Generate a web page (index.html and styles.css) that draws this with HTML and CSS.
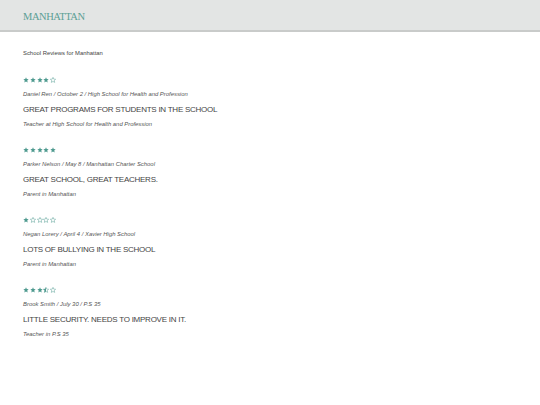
FILE: index.html
```html
<!DOCTYPE html>
<html>
<head>
<meta charset="utf-8">
<link rel="stylesheet" href="styles.css">
</head>
<body>
<svg width="0" height="0" class="defs">
  <defs>
    <path id="star" d="M5 0.6 L6.3 3.5 L9.4 3.8 L7.1 5.9 L7.8 9 L5 7.4 L2.2 9 L2.9 5.9 L0.6 3.8 L3.7 3.5 Z"/>
    <clipPath id="lefthalf"><rect x="0" y="0" width="5" height="10"/></clipPath>
  </defs>
</svg>
<header class="topbar">
  <div class="brand">MANHATTAN</div>
</header>
<main class="content">
  <p class="intro">School Reviews for Manhattan</p>

  <section class="review">
    <div class="stars">
      <svg viewBox="0 0 10 10" class="st"><use href="#star" class="full"/></svg>
      <svg viewBox="0 0 10 10" class="st"><use href="#star" class="full"/></svg>
      <svg viewBox="0 0 10 10" class="st"><use href="#star" class="full"/></svg>
      <svg viewBox="0 0 10 10" class="st"><use href="#star" class="full"/></svg>
      <svg viewBox="0 0 10 10" class="st"><use href="#star" class="empty"/></svg>
    </div>
    <p class="meta">Daniel Ren / October 2 / High School for Health and Profession</p>
    <h2 class="title">GREAT PROGRAMS FOR STUDENTS IN THE SCHOOL</h2>
    <p class="role">Teacher at High School for Health and Profession</p>
  </section>

  <section class="review">
    <div class="stars">
      <svg viewBox="0 0 10 10" class="st"><use href="#star" class="full"/></svg>
      <svg viewBox="0 0 10 10" class="st"><use href="#star" class="full"/></svg>
      <svg viewBox="0 0 10 10" class="st"><use href="#star" class="full"/></svg>
      <svg viewBox="0 0 10 10" class="st"><use href="#star" class="full"/></svg>
      <svg viewBox="0 0 10 10" class="st"><use href="#star" class="full"/></svg>
    </div>
    <p class="meta">Parker Nelson / May 8 / Manhattan Charter School</p>
    <h2 class="title">GREAT SCHOOL, GREAT TEACHERS.</h2>
    <p class="role">Parent in Manhattan</p>
  </section>

  <section class="review">
    <div class="stars">
      <svg viewBox="0 0 10 10" class="st"><use href="#star" class="full"/></svg>
      <svg viewBox="0 0 10 10" class="st"><use href="#star" class="empty"/></svg>
      <svg viewBox="0 0 10 10" class="st"><use href="#star" class="empty"/></svg>
      <svg viewBox="0 0 10 10" class="st"><use href="#star" class="empty"/></svg>
      <svg viewBox="0 0 10 10" class="st"><use href="#star" class="empty"/></svg>
    </div>
    <p class="meta">Negan Lorery / April 4 / Xavier High School</p>
    <h2 class="title">LOTS OF BULLYING IN THE SCHOOL</h2>
    <p class="role">Parent in Manhattan</p>
  </section>

  <section class="review">
    <div class="stars">
      <svg viewBox="0 0 10 10" class="st"><use href="#star" class="full"/></svg>
      <svg viewBox="0 0 10 10" class="st"><use href="#star" class="full"/></svg>
      <svg viewBox="0 0 10 10" class="st"><use href="#star" class="full"/></svg>
      <svg viewBox="0 0 10 10" class="st"><use href="#star" class="empty"/><use href="#star" class="full" clip-path="url(#lefthalf)"/></svg>
      <svg viewBox="0 0 10 10" class="st"><use href="#star" class="empty"/></svg>
    </div>
    <p class="meta">Brook Smith / July 30 / P.S 35</p>
    <h2 class="title">LITTLE SECURITY. NEEDS TO IMPROVE IN IT.</h2>
    <p class="role">Teacher in P.S 35</p>
  </section>
</main>
</body>
</html>
```

FILE: styles.css
```css
html, body {
  margin: 0;
  padding: 0;
  background: #ffffff;
}
body {
  font-family: "Liberation Sans", Arial, sans-serif;
  color: #444444;
}
.defs {
  position: absolute;
  width: 0;
  height: 0;
}
.topbar {
  height: 30px;
  background: #e3e5e4;
  border-bottom: 2px solid #c9cbca;
  display: flex;
  align-items: center;
  padding-left: 23px;
}
.brand {
  font-family: "Liberation Serif", "Times New Roman", serif;
  font-size: 10.5px;
  color: #5c9f95;
  letter-spacing: -0.45px;
  margin-top: 2px;
}
.content {
  padding: 16px 23px 0 23px;
}
.intro {
  margin: 0 0 18px 0;
  font-size: 5.9px;
  line-height: 10px;
  color: #444;
}
.review {
  height: 70px;
}
.stars {
  display: flex;
  gap: 0.8px;
  height: 8px;
  align-items: center;
}
.st {
  width: 6px;
  height: 6px;
}
.full {
  fill: #4e9a8f;
}
.empty {
  fill: none;
  stroke: #4e9a8f;
  stroke-width: 0.8;
}
.meta {
  margin: 6.2px 0 0 0;
  font-size: 5.9px;
  line-height: 9px;
  font-style: italic;
  color: #555;
}
.title {
  margin: 5px 0 0 0;
  font-size: 8px;
  line-height: 11px;
  font-weight: normal;
  letter-spacing: -0.25px;
  color: #444;
}
.role {
  margin: 4.6px 0 0 0;
  font-size: 5.9px;
  line-height: 9px;
  font-style: italic;
  color: #555;
}
```
